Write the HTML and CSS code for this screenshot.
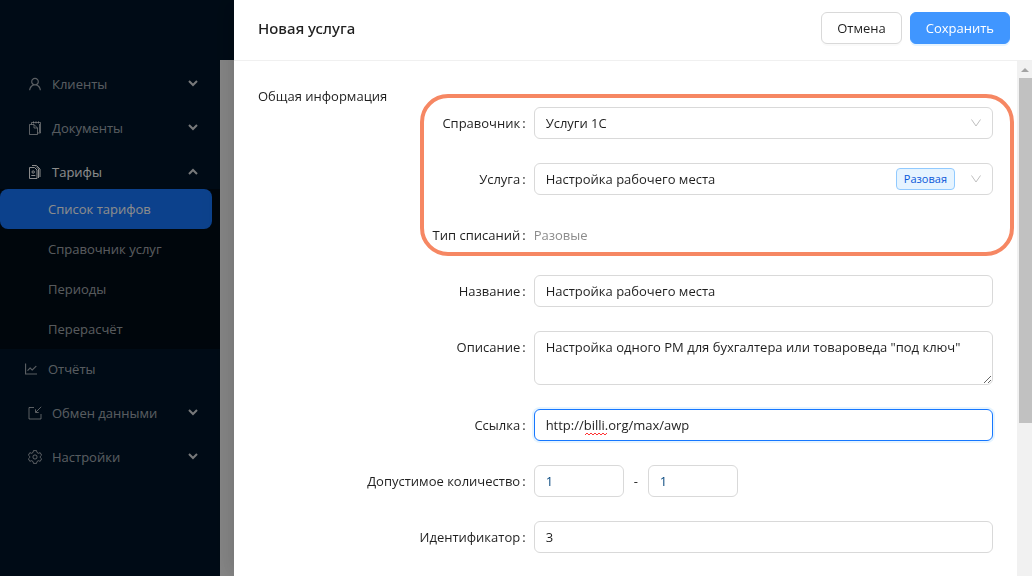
FILE: index.html
```html
<!DOCTYPE html>
<html lang="ru">
<head>
  <meta charset="UTF-8" />
  <meta name="viewport" content="width=device-width, initial-scale=1" />
  <title>Новая услуга</title>
  <link rel="stylesheet" href="styles.css">
</head>
<body>

  <div class="app">
    <header class="topbar"></header>
    <div class="layout">
      <nav class="sider">
        <button class="menu-item" type="button">
          <svg class="icon" viewBox="64 64 896 896"><path fill="currentColor" d="M858.5 763.6a374 374 0 00-80.6-119.5 375.63 375.63 0 00-119.5-80.6c-.4-.2-.8-.3-1.2-.5C719.5 518 760 444.7 760 362c0-137-111-248-248-248S264 225 264 362c0 82.7 40.5 156 102.8 201.1-.4.2-.8.3-1.2.5-44.8 18.9-85 46-119.5 80.6a375.63 375.63 0 00-80.6 119.5A371.7 371.7 0 00136 901.8a8 8 0 008 8.2h60c4.4 0 7.9-3.5 8-7.8 2-77.2 33-149.5 87.8-204.3 56.7-56.7 132-87.9 212.2-87.9s155.5 31.2 212.2 87.9C779 752.7 810 825 812 902.2c.1 4.4 3.6 7.8 8 7.8h60a8 8 0 008-8.2c-1-47.8-10.9-94.3-29.5-138.2zM512 534c-45.9 0-89.1-17.9-121.6-50.4S340 407.9 340 362c0-45.9 17.9-89.1 50.4-121.6S466.1 190 512 190s89.1 17.9 121.6 50.4S684 316.1 684 362c0 45.9-17.9 89.1-50.4 121.6S557.9 534 512 534z"/></svg>
          <span>Клиенты</span>
          <svg class="arrow" viewBox="0 0 10 6"><path d="M1 0l4 4 4-4"/></svg>
        </button>
        <button class="menu-item" type="button">
          <svg class="icon line" viewBox="0 0 14 14"><path d="M1.500 3.500h4.500l3.500 3.500v6.500h-8zM6 3.500v3.500h3.500M3.500 3.500V1.500h9v10.500H9.500M5.500 .3v2.200M8 .3v2.200M10.500 .3v2.200M11.500 3v8.500"/></svg>
          <span>Документы</span>
          <svg class="arrow" viewBox="0 0 10 6"><path d="M1 0l4 4 4-4"/></svg>
        </button>
        <button class="menu-item open" type="button" aria-expanded="true">
          <svg class="icon line" viewBox="0 0 14 14"><path d="M1.500 2.500h5l2.500 2.500v8.500h-7.500zM4 .5h4.500l3.500 3.500v8M8 1.500l2.500 2.500v9M3.300 10.500h4"/><circle cx="5.200" cy="7" r="1.200"/></svg>
          <span>Тарифы</span>
          <svg class="arrow" viewBox="0 0 10 6"><path d="M1 5l4-4 4 4"/></svg>
        </button>
        <div class="submenu">
          <a class="submenu-item selected" href="#">Список тарифов</a>
          <a class="submenu-item" href="#">Справочник услуг</a>
          <a class="submenu-item" href="#">Периоды</a>
          <a class="submenu-item" href="#">Перерасчёт</a>
        </div>
        <a class="menu-item plain" href="#">
          <svg class="icon" viewBox="64 64 896 896"><path fill="currentColor" d="M888 792H200V168c0-4.400-3.600-8-8-8h-56c-4.400 0-8 3.600-8 8v688c0 4.400 3.600 8 8 8h752c4.400 0 8-3.600 8-8v-56c0-4.400-3.600-8-8-8zM305.800 637.700c3.100 3.100 8.100 3.100 11.300 0l138.300-137.600L583 628.500c3.100 3.100 8.200 3.100 11.300 0l275.400-275.300c3.100-3.100 3.100-8.200 0-11.300l-39.600-39.600a8.030 8.030 0 00-11.300 0l-230 229.900L461.400 404a8.030 8.030 0 00-11.300 0L266.300 586.700a8.030 8.030 0 000 11.300l39.500 39.700z"/></svg>
          <span>Отчёты</span>
        </a>
        <button class="menu-item" type="button">
          <svg class="icon line" viewBox="0 0 14 14"><path d="M6 1.500H1v11.500h12V8M13.200 .8L8 6M7.500 3.300V6.500h3.200"/></svg>
          <span>Обмен данными</span>
          <svg class="arrow" viewBox="0 0 10 6"><path d="M1 0l4 4 4-4"/></svg>
        </button>
        <button class="menu-item" type="button">
          <svg class="icon line" viewBox="0 0 14 14"><path d="M5.500 .6h3l.5 1.900 1.300.8 1.900-.6 1.400 2.500-1.400 1.300v1l1.400 1.300-1.400 2.500-1.900-.6-1.300.8-.5 1.900h-3L5 11.500l-1.300-.8-1.900.6L.4 8.800l1.400-1.300v-1L.4 5.200l1.400-2.500 1.900.6L5 2.500z"/><circle cx="7" cy="7" r="2.100"/></svg>
          <span>Настройки</span>
          <svg class="arrow" viewBox="0 0 10 6"><path d="M1 0l4 4 4-4"/></svg>
        </button>
      </nav>
      <main class="content"></main>
    </div>
  </div>

  <div class="mask"></div>

  <section class="drawer" role="dialog" aria-labelledby="drawer-title">
    <header class="drawer-header">
      <h1 class="drawer-title" id="drawer-title">Новая услуга</h1>
      <button class="btn" type="button">Отмена</button>
      <button class="btn btn-primary" type="submit" form="service-form">Сохранить</button>
    </header>

    <div class="drawer-main">
      <form class="drawer-body" id="service-form">
        <h2 class="section-title">Общая информация</h2>

        <div class="form-rows highlight">
          <div class="form-row">
            <label for="catalog">Справочник</label>
            <div class="control">
              <select class="field" id="catalog">
                <option>Услуги 1С</option>
              </select>
              <svg class="select-arrow" viewBox="0 0 12 12"><path d="M1.500 2.500L6 9l4.500-6.500"/></svg>
            </div>
          </div>
          <div class="form-row">
            <label for="service">Услуга</label>
            <div class="control">
              <select class="field" id="service">
                <option>Настройка рабочего места</option>
              </select>
              <span class="tag">Разовая</span>
              <svg class="select-arrow" viewBox="0 0 12 12"><path d="M1.500 2.500L6 9l4.500-6.500"/></svg>
            </div>
          </div>
          <div class="form-row">
            <label for="charge-type">Тип списаний</label>
            <div class="control">
              <output class="static" id="charge-type">Разовые</output>
            </div>
          </div>
        </div>

        <div class="form-rows">
          <div class="form-row">
            <label for="name">Название</label>
            <div class="control">
              <input class="field" id="name" type="text" value="Настройка рабочего места">
            </div>
          </div>
          <div class="form-row">
            <label for="description">Описание</label>
            <div class="control">
              <textarea class="field" id="description">Настройка одного РМ для бухгалтера или товароведа "под ключ"</textarea>
            </div>
          </div>
          <div class="form-row">
            <label for="link">Ссылка</label>
            <div class="control">
              <input class="field active" id="link" type="text" value="http://billi.org/max/awp">
              <svg class="squiggle" viewBox="0 0 22 4"><path d="M0 3l2-2 2 2 2-2 2 2 2-2 2 2 2-2 2 2 2-2 2 2 2-2"/></svg>
            </div>
          </div>
          <div class="form-row">
            <label for="count-min">Допустимое количество</label>
            <div class="control range">
              <input class="field number" id="count-min" type="text" value="1">
              <span>-</span>
              <input class="field number" type="text" value="1" aria-label="Максимальное количество">
            </div>
          </div>
          <div class="form-row">
            <label for="ident">Идентификатор</label>
            <div class="control">
              <input class="field" id="ident" type="text" value="3">
            </div>
          </div>
        </div>
      </form>

      <div class="scrollbar">
        <svg class="scroll-arrow" viewBox="0 0 8 4"><path d="M0 4l4-4 4 4z"/></svg>
        <div class="scroll-thumb"></div>
      </div>
    </div>
  </section>

</body>
</html>
```
FILE: styles.css
```css
* {
  box-sizing: border-box;
}
body {
  margin: 0;
  height: 100vh;
  overflow: hidden;
  font-family: "Open Sans", "Noto Sans", sans-serif;
  font-size: 13px;
  line-height: 22px;
  color: #1f1f1f;
}
button, input, select, textarea {
  font: inherit;
  color: inherit;
}

/* page under the drawer */
.app {
  display: flex;
  flex-direction: column;
  height: 100vh;
}
.topbar {
  height: 60px;
  background: #001529;
}
.layout {
  display: flex;
  flex: 1;
}
.sider {
  width: 220px;
  padding-top: 4px;
  background: #001529;
}
.content {
  flex: 1;
  background: #f5f5f5;
}
.menu-item {
  display: flex;
  align-items: center;
  gap: 10px;
  width: 100%;
  height: 40px;
  margin-bottom: 4px;
  padding: 0 22px 0 28px;
  border: none;
  background: none;
  color: rgba(255, 255, 255, 0.65);
  text-align: left;
  text-decoration: none;
  cursor: pointer;
}
.menu-item.open {
  margin-bottom: -3px;
  color: #fff;
}
.menu-item.plain {
  padding-left: 24px;
}
.icon {
  width: 14px;
  height: 14px;
}
.icon.line {
  fill: none;
  stroke: currentColor;
}
.arrow {
  width: 10px;
  height: 6px;
  margin-left: auto;
  overflow: visible;
  fill: none;
  stroke: rgba(255, 255, 255, 0.85);
  stroke-width: 2;
}
.submenu {
  background: #000c17;
}
.submenu-item {
  display: block;
  height: 40px;
  margin-right: 8px;
  padding-left: 48px;
  border-radius: 8px;
  line-height: 40px;
  color: rgba(255, 255, 255, 0.65);
  text-decoration: none;
}
.submenu-item.selected {
  background: #1677ff;
  color: #fff;
}
.mask {
  position: fixed;
  inset: 0;
  background: rgba(0, 0, 0, 0.45);
}

/* drawer */
.drawer {
  position: fixed;
  inset: 0 0 0 234px;
  display: flex;
  flex-direction: column;
  background: #fff;
  box-shadow: -6px 0 16px rgba(0, 0, 0, 0.08), -9px 0 28px 8px rgba(0, 0, 0, 0.05);
}
.drawer-header {
  display: flex;
  align-items: center;
  gap: 8px;
  padding: 12px 22px 16px 24px;
  border-bottom: 1px solid #f0f0f0;
}
.drawer-title {
  flex: 1;
  margin: 0;
  font-family: "Noto Sans", sans-serif;
  font-size: 15px;
  font-weight: 500;
}
.btn {
  height: 32px;
  padding: 0 15px;
  border: 1px solid #d9d9d9;
  border-radius: 6px;
  background: #fff;
  box-shadow: 0 2px 0 rgba(0, 0, 0, 0.02);
  cursor: pointer;
}
.btn-primary {
  border-color: #4096ff;
  background: #4096ff;
  color: #fff;
  box-shadow: 0 2px 0 rgba(5, 145, 255, 0.1);
}
.drawer-main {
  display: flex;
  flex: 1;
  min-height: 0;
}
.drawer-body {
  flex: 1;
  padding: 24px;
  overflow: hidden;
}
.section-title {
  margin: 0;
  font-size: 13px;
  font-weight: 400;
}

/* form */
.form-rows {
  position: relative;
  display: flex;
  flex-direction: column;
  gap: 24px;
  margin-bottom: 24px;
}
.highlight::after {
  content: "";
  position: absolute;
  inset: -13px -21px -5px 162px;
  border: 4px solid #f68763;
  border-radius: 28px;
  pointer-events: none;
}
.form-row {
  display: grid;
  grid-template-columns: 3fr 5fr;
}
.form-row label {
  padding: 5px 8px 5px 0;
  text-align: right;
}
.form-row label::after {
  content: ":";
  margin-left: 2px;
}
.control {
  position: relative;
  display: flex;
}
.field {
  width: 100%;
  height: 32px;
  padding: 4px 11px;
  border: 1px solid #d9d9d9;
  border-radius: 6px;
  outline: none;
  background: #fff;
  appearance: none;
}
textarea.field {
  height: 54px;
  resize: vertical;
}
.field.active {
  border-color: #1677ff;
  box-shadow: 0 0 0 2px rgba(5, 145, 255, 0.1);
}
.select-arrow {
  position: absolute;
  top: 10px;
  right: 11px;
  width: 12px;
  height: 12px;
  fill: none;
  stroke: #bfbfbf;
}
.tag {
  position: absolute;
  top: 5px;
  right: 38px;
  padding: 0 7px;
  border: 1px solid #91caff;
  border-radius: 4px;
  background: #e6f4ff;
  color: #0958d9;
  font-size: 11px;
  line-height: 20px;
}
.static {
  padding: 5px 0;
  color: #8c8c8c;
}
.squiggle {
  position: absolute;
  top: 23px;
  left: 51px;
  width: 22px;
  height: 4px;
  fill: none;
  stroke: #f33;
}
.range {
  align-items: center;
  gap: 10px;
}
.number {
  width: 90px;
  color: #0a4a80;
}

/* scrollbar */
.scrollbar {
  display: flex;
  flex-direction: column;
  width: 15px;
  padding-left: 2px;
  background: #f1f1f1;
}
.scroll-arrow {
  width: 8px;
  height: 4px;
  margin: 7px auto 6px 2px;
  fill: #a3a3a3;
}
.scroll-thumb {
  height: 67%;
  background: #c1c1c1;
}
```
